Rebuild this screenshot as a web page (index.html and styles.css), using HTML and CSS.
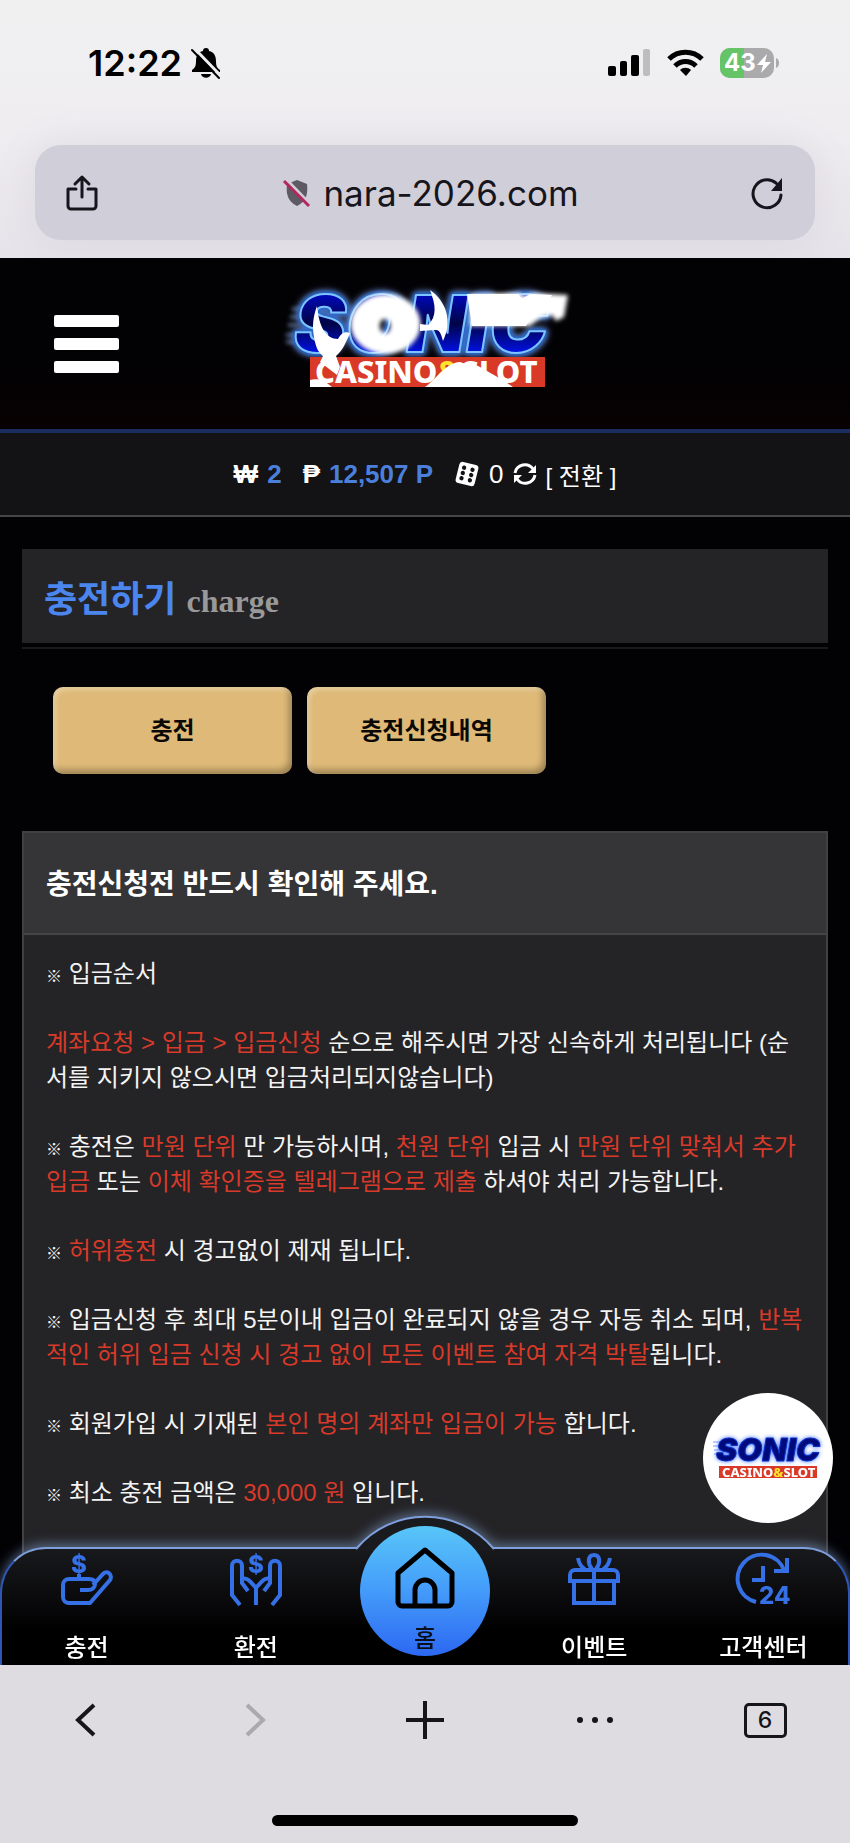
FILE: index.html
```html
<!DOCTYPE html>
<html lang="ko">

<head>
    <meta charset="UTF-8">
    <meta name="viewport" content="width=device-width, initial-scale=1.0">
    <title>충전하기</title>
    <link rel="stylesheet" href="styles.css">
</head>

<body>
    <div class="browser-top">
        <div class="status">
            <span class="time">12:22</span>
            <svg class="bell" width="32" height="32" viewBox="0 0 32 32">
                <path d="M16 1c2 0 3 1 3 3c5 1 7 5 7 10c0 5 1 7 4 9v2H2v-2c3-2 4-4 4-9c0-5 2-9 7-10c0-2 1-3 3-3z" />
                <path d="M11 27h10c-1 5-9 5-10 0z" />
                <path d="M4 1L31 29" stroke="#efeef0" stroke-width="3" />
                <path d="M2 3L29 31" stroke="#000" stroke-width="2" stroke-linecap="round" />
            </svg>
            <span class="space"></span>
            <svg width="43" height="28" viewBox="0 0 43 28">
                <rect x="0" y="17" width="8" height="10" rx="2" />
                <rect x="12" y="12" width="7" height="15" rx="2" />
                <rect x="23" y="6" width="8" height="21" rx="2" />
                <rect x="35" y="0" width="7" height="27" rx="2" fill="#bdbcbf" />
            </svg>
            <svg width="37" height="28" viewBox="0 0 37 28" fill="none" stroke="#000" stroke-width="5">
                <path d="M2 10c9-9 24-9 33 0" />
                <path d="M8 17c6-6 15-6 21 0" />
                <path d="M13 21c3-3 8-3 11 0l-5 6z" fill="#000" stroke="none" />
            </svg>
            <svg width="60" height="30" viewBox="0 0 60 30">
                <defs>
                    <clipPath id="cell"><rect width="54" height="30" rx="10" /></clipPath>
                </defs>
                <g clip-path="url(#cell)">
                    <rect width="54" height="30" fill="#aaa9ac" />
                    <rect width="24" height="30" fill="#65c466" />
                </g>
                <path d="M56 10c4 1 4 9 0 10z" fill="#aaa9ac" />
                <text class="cell-text" x="4" y="23">43</text>
                <path d="M47 6L37 17h6l-2 8L51 14h-6z" fill="#fff" />
            </svg>
        </div>
        <div class="address">
            <button class="plain" aria-label="공유">
                <svg width="32" height="36" viewBox="0 0 32 36" fill="none" stroke="#16151c" stroke-width="3" stroke-linecap="round" stroke-linejoin="round">
                    <path d="M10 14H2v17a3 3 0 0 0 3 3h22a3 3 0 0 0 3-3V14h-8M16 22V2M9 9l7-7l7 7" />
                </svg>
            </button>
            <a class="url" href="#">
                <svg width="28" height="28" viewBox="0 0 28 28">
                    <path d="M14 1l10 4c1 9 0 17-10 22C4 22 3 14 4 5z" fill="#5d5a64" />
                    <path d="M4 1L28 26" stroke="#d0ced8" stroke-width="3" />
                    <path d="M1 2L26 27" stroke="#b3285c" stroke-width="3" />
                </svg>
                nara-2026.com
            </a>
            <button class="plain" aria-label="새로고침">
                <svg width="34" height="34" viewBox="0 0 34 34">
                    <path d="M31 19a14 14 0 1 1-5-12l3 3" fill="none" stroke="#16151c" stroke-width="3" stroke-linecap="round" />
                    <path d="M32 2v13H21z" fill="#16151c" />
                </svg>
            </button>
        </div>
    </div>

    <header>
        <button class="menu" aria-label="메뉴"><i></i><i></i><i></i></button>
        <a href="#" aria-label="SONIC CASINO&amp;SLOT">
            <svg class="logo" width="290" height="110" viewBox="0 0 290 110">
                <defs>
                    <filter id="soft" x="-20%" y="-20%" width="140%" height="140%"><feGaussianBlur stdDeviation="2" /></filter>
                    <linearGradient id="navy" x1="0" y1="0" x2="0" y2="1">
                        <stop offset=".2" stop-color="#0008b8" />
                        <stop offset=".5" stop-color="#000446" />
                        <stop offset=".8" stop-color="#0010e0" />
                    </linearGradient>
                </defs>
                <path d="M12 20h14M10 28h12M8 36h12M6 46h10M6 53h10" stroke="#8fb2ec" stroke-width="2" filter="url(#soft)" />
                <text class="sonic" x="14" y="63">SONIC</text>
                <rect x="30" y="68" width="235" height="30" fill="#d93a27" />
                <text class="casino" x="35" y="94">CASINO<tspan fill="#ffe22b">&amp;</tspan>SLOT</text>
                <g fill="#fff">
                    <path d="M105 5a35 30 0 1 0 1 0zM105 30c7 0 7 14 0 14s-7-14 0-14z" fill-rule="evenodd" filter="url(#soft)" />
                    <path d="M190 5l50-1l3 3l10-3l35 2l-4 22l-8 4l-4-6l-12 3l-10 8H190z" filter="url(#soft)" />
                    <path d="M187 5L238 5L242 10L250 5L272 6L262 20L252 27L246 37H192z" />
                    <path d="M37 17C33 28 32 37 34 48C36 60 39 64 43 67L40 73L57 86L60 78L56 67C62 62 66 54 70 44C64 42 61 45 58 50C46 50 39 38 37 17z" />
                    <path d="M150 1C166 12 173 32 163 52C161 45 160 41 156 41L140 42V35L148 36C157 28 156 16 150 1z" />
                    <path d="M30 98v-7c8-2 14 0 22 7zM145 98c12-8 20-24 35-25l6 2l7-1c10 6 26 14 40 24z" />
                </g>
            </svg>
        </a>
    </header>

    <div class="balance">
        <b>₩</b>
        <b class="blue">2</b>
        <b class="peso">₱</b>
        <b class="blue">12,507 P</b>
        <svg class="dice" width="26" height="26" viewBox="0 0 24 24">
            <g transform="rotate(14 12 12)">
                <rect x="3" y="2" width="18" height="20" rx="3" fill="#fff" />
                <g fill="#131214">
                    <circle cx="8" cy="7" r="2" /><circle cx="8" cy="12" r="2" /><circle cx="8" cy="17" r="2" />
                    <circle cx="16" cy="7" r="2" /><circle cx="16" cy="12" r="2" /><circle cx="16" cy="17" r="2" />
                </g>
            </g>
        </svg>
        <span>0</span>
        <svg width="24" height="24" viewBox="0 0 24 24">
            <path d="M2 11a10 10 0 0 1 18-4M22 13a10 10 0 0 1-18 4" fill="none" stroke="#fff" stroke-width="3" />
            <path d="M23 3v8h-8zM1 21v-8h8z" fill="#fff" />
        </svg>
        <a href="#">[ 전환 ]</a>
    </div>

    <main>
        <h1>충전하기 <small>charge</small></h1>
        <div class="tabs">
            <button>충전</button>
            <button>충전신청내역</button>
        </div>
        <section class="notice">
            <h2>충전신청전 반드시 확인해 주세요.</h2>
            <div class="text">
                <p><i>※</i> 입금순서</p>
                <p><em>계좌요청 &gt; 입금 &gt; 입금신청</em> 순으로 해주시면 가장 신속하게 처리됩니다 (순서를 지키지 않으시면 입금처리되지않습니다)</p>
                <p><i>※</i> 충전은 <em>만원 단위</em> 만 가능하시며, <em>천원 단위</em> 입금 시 <em>만원 단위 맞춰서 추가 입금</em> 또는 <em>이체 확인증을 텔레그램으로 제출</em> 하셔야 처리 가능합니다.</p>
                <p><i>※</i> <em>허위충전</em> 시 경고없이 제재 됩니다.</p>
                <p><i>※</i> 입금신청 후 최대 5분이내 입금이 완료되지 않을 경우 자동 취소 되며, <em>반복적인 허위 입금 신청 시 경고 없이 모든 이벤트 참여 자격 박탈</em>됩니다.</p>
                <p><i>※</i> 회원가입 시 기재된 <em>본인 명의 계좌만 입금이 가능</em> 합니다.</p>
                <p><i>※</i> 최소 충전 금액은 <em>30,000 원</em> 입니다.</p>
            </div>
        </section>
    </main>

    <footer>
        <a class="float" href="#" aria-label="SONIC CASINO&amp;SLOT">
            <svg width="116" height="46" viewBox="0 0 116 46">
                <path d="M3 7h10M3 11h8M4 15h6M4 19h6" stroke="#7d9cf5" stroke-width="1" />
                <text class="sonic small" x="6" y="26">SONIC</text>
                <rect x="9" y="31" width="98" height="12" fill="#d93a27" />
                <text class="casino small" x="12" y="42">CASINO<tspan fill="#ffe22b">&amp;</tspan>SLOT</text>
            </svg>
        </a>
        <nav>
            <svg class="bulge" width="140" height="36" viewBox="0 0 140 36">
                <path d="M0 36L2 33C37-9 103-9 138 33L140 36z" fill="#1a1b1e" />
                <path d="M1 34C37-9 103-9 139 34" fill="none" stroke="#7f9fdc" stroke-width="2" />
            </svg>
            <a href="#">
                <svg width="52" height="52" viewBox="0 0 52 52" class="line">
                    <path d="M19 37h8c4 0 7-2 7-6s-3-5-6-5H8a6 6 0 0 0-6 6v12a6 6 0 0 0 6 6h21L49 27c3-4-2-11-7-6L32 32" />
                    <text class="mark" x="18" y="20" text-anchor="middle">$</text>
                    <path d="M18 21v5" />
                </svg>
                충전
            </a>
            <a href="#">
                <svg width="52" height="52" viewBox="0 0 52 52" class="line">
                    <path d="M10 52L2 42V13c0-7 10-7 10 0v17l6 8M12 26c5-2 8 2 14 9v17" />
                    <path d="M42 52l8-10V13c0-7-10-7-10 0v17l-6 8M40 26c-5-2-8 2-14 9" />
                    <text class="mark" x="26" y="20" text-anchor="middle">$</text>
                </svg>
                환전
            </a>
            <a class="home" href="#">
                <svg width="62" height="62" viewBox="0 0 62 62">
                    <path d="M31 3L58 26v29a4 4 0 0 1-4 4H8a4 4 0 0 1-4-4V26zM21 59V43a10 10 0 0 1 20 0v16" />
                </svg>
                홈
            </a>
            <a href="#">
                <svg width="52" height="52" viewBox="0 0 52 52" class="line">
                    <path d="M2 28v-6a5 5 0 0 1 5-5h38a5 5 0 0 1 5 5v6zM6 28v22h40V28M26 17v33" />
                    <path d="M24 16c-5-6-4-14 2-14s7 8 2 14M10 5c1 6 3 9 7 11M42 5c-1 6-3 9-7 11" />
                </svg>
                이벤트
            </a>
            <a href="#">
                <svg width="52" height="52" viewBox="0 0 52 52" class="line">
                    <path d="M19 49A24 24 0 1 1 47 17M50 5v13H37M26 13v14H15" />
                    <text class="mark" x="22" y="51">24</text>
                </svg>
                고객센터
            </a>
        </nav>
        <div class="browser-bottom">
            <div class="toolbar">
                <button class="plain" aria-label="뒤로">
                    <svg width="24" height="36" viewBox="0 0 24 36"><path d="M21 3L5 18l16 15" /></svg>
                </button>
                <button class="plain" aria-label="앞으로" disabled>
                    <svg width="24" height="36" viewBox="0 0 24 36"><path d="M4 3l16 15L4 33" /></svg>
                </button>
                <button class="plain" aria-label="새 탭">
                    <svg width="38" height="38" viewBox="0 0 38 38"><path d="M19 0v38M0 19h38" /></svg>
                </button>
                <button class="plain" aria-label="더보기">
                    <svg width="38" height="8" viewBox="0 0 38 8" class="dots">
                        <circle cx="4" cy="4" r="3" /><circle cx="19" cy="4" r="3" /><circle cx="34" cy="4" r="3" />
                    </svg>
                </button>
                <button class="plain" aria-label="탭 6개"><span class="count">6</span></button>
            </div>
            <div class="bar"></div>
        </div>
    </footer>
</body>

</html>
```
FILE: styles.css
```css
* {
    box-sizing: border-box;
}

body {
    margin: 0;
    min-height: 100vh;
    display: flex;
    flex-direction: column;
    background: #020104;
    color: #f4f4f4;
    font-family: "Liberation Sans", "Noto Sans CJK KR", sans-serif;
    font-size: 24px;
}

a {
    color: inherit;
    text-decoration: none;
}

svg {
    display: block;
    flex: none;
    overflow: visible;
}

button {
    font-family: inherit;
    cursor: pointer;
}

.plain {
    padding: 0;
    border: none;
    background: none;
    color: #16151c;
}

/* 브라우저 상단 */
.browser-top {
    padding: 44px 35px 18px;
    background: linear-gradient(#f0f0f1, #efedf0 50%, #e6e3ea);
}

.status {
    display: flex;
    align-items: center;
    height: 38px;
    margin-bottom: 63px;
    padding: 0 35px 0 53px;
    gap: 16px;
}

.time {
    color: #000;
    font: 600 36px/38px Inter, sans-serif;
}

.bell {
    margin-left: -8px;
}

.space {
    flex: 1;
}

.cell-text {
    fill: #fff;
    font: 700 24px Inter, sans-serif;
}

.address {
    display: flex;
    align-items: center;
    justify-content: space-between;
    height: 95px;
    padding: 0 31px;
    border-radius: 26px;
    background: #d0ced8;
    box-shadow: 0 0 40px rgba(120, 110, 140, .12);
}

.url {
    display: flex;
    align-items: center;
    gap: 12px;
    padding-left: 14px;
    color: #16151c;
    font: 35px/44px Inter, sans-serif;
}

/* 헤더 */
header {
    display: grid;
    grid-template-columns: 1fr auto 1fr;
    align-items: center;
    height: 175px;
    padding: 0 54px;
    background: linear-gradient(#020104 60%, #080102);
    border-bottom: 4px solid #1b2c5e;
}

.menu {
    display: grid;
    gap: 11px;
    width: 65px;
    padding: 0;
    border: none;
    background: none;
}

.menu i {
    height: 12px;
    border-radius: 2px;
    background: #fff;
}

.sonic {
    fill: url(#navy);
    stroke: #7cc4ff;
    stroke-width: 2;
    stroke-linejoin: round;
    font: italic 900 78px Inter, sans-serif;
    filter: drop-shadow(0 0 2px #1c60d0) drop-shadow(0 0 2px #1c60d0) drop-shadow(0 0 3px #8098d0);
}

.sonic.small {
    fill: #000a7c;
    stroke: #0a32c8;
    stroke-width: 1;
    font-size: 32px;
    filter: drop-shadow(0 0 2px #3d70ff);
}

.casino {
    fill: #fff;
    font: 800 31px "Noto Sans", sans-serif;
}

.casino.small {
    font-size: 13px;
}

.balance {
    display: flex;
    align-items: center;
    justify-content: center;
    gap: 9px;
    height: 84px;
    background: #131214;
    border-bottom: 2px solid #454446;
    color: #fff;
    font-size: 26px;
}

.balance .blue {
    color: #4a80dc;
}

.balance a {
    font-size: 24px;
}

.peso,
.dice {
    margin-left: 12px;
}

/* 본문 */
main {
    flex: 1;
    display: flex;
    flex-direction: column;
    padding: 32px 22px 0;
}

h1 {
    position: relative;
    height: 94px;
    margin: 0 0 44px;
    padding: 0 22px;
    background: #242326;
    color: #4a86ee;
    font-size: 36px;
    line-height: 102px;
}

h1::after {
    content: "";
    position: absolute;
    left: 0;
    right: 0;
    bottom: -6px;
    height: 2px;
    background: #1a191c;
}

h1 small {
    color: #999;
    font-family: "Liberation Serif", serif;
    font-size: 32px;
}

.tabs {
    display: flex;
    gap: 15px;
    margin-bottom: 57px;
    padding: 0 31px;
}

.tabs button {
    width: 239px;
    height: 87px;
    padding: 0 0 4px;
    border: none;
    border-radius: 10px;
    background: #deb977;
    box-shadow: inset 3px 3px 5px rgba(255, 255, 255, .3), inset -3px -4px 6px rgba(0, 0, 0, .3);
    color: #0b0906;
    font-size: 24px;
    font-weight: bold;
}

.notice {
    flex: 1;
    border: 2px solid #414043;
    background: #242326;
}

h2 {
    margin: 0;
    padding: 4px 22px 0;
    border-bottom: 2px solid #454447;
    background: #353437;
    color: #fff;
    font-size: 28px;
    line-height: 96px;
}

.text {
    padding: 21px 20px 124px 22px;
    line-height: 35px;
}

.text p {
    margin: 0 0 34px;
}

.text em {
    color: #d83a2a;
    font-style: normal;
}

.text i {
    font-size: 16px;
    font-style: normal;
    font-weight: bold;
    line-height: 0;
}

/* 하단 고정 메뉴 */
footer {
    position: fixed;
    left: 0;
    right: 0;
    bottom: 0;
}

.float {
    position: absolute;
    right: 17px;
    bottom: 320px;
    display: flex;
    align-items: center;
    justify-content: center;
    width: 130px;
    height: 130px;
    border-radius: 50%;
    background: #fff;
}

nav {
    position: relative;
    display: grid;
    grid-template-columns: repeat(5, 1fr);
    height: 118px;
    border: 2px solid #2f56b4;
    border-top-color: #7f9fdc;
    border-bottom: none;
    border-radius: 46px 46px 0 0;
    background: linear-gradient(#18191c, #08080a 50%, #000 70%);
    filter: drop-shadow(0 -3px 6px rgba(140, 175, 225, .5));
}

nav a {
    display: flex;
    flex-direction: column;
    align-items: center;
    gap: 25px;
    padding-top: 4px;
    color: #fff;
    font-weight: 500;
    line-height: 36px;
}

.bulge {
    position: absolute;
    top: -34px;
    left: 50%;
    margin-left: -70px;
}

.line {
    fill: none;
    stroke: #3670e6;
    stroke-width: 4;
}

.mark {
    fill: #3670e6;
    stroke: none;
    font: 800 24px Inter, sans-serif;
}

nav .home {
    position: relative;
    justify-self: center;
    gap: 12px;
    width: 130px;
    height: 130px;
    margin-top: -23px;
    padding-top: 21px;
    border-radius: 50%;
    background: linear-gradient(#58c6f8, #46a0fa 45%, #2c68f2);
    color: #0a0f1c;
}

.home svg {
    fill: none;
    stroke: #000;
    stroke-width: 5;
    stroke-linejoin: round;
}

/* 브라우저 하단 */
.browser-bottom {
    position: relative;
    overflow: hidden;
    background: #dfdce1;
}

.toolbar {
    display: grid;
    grid-template-columns: repeat(5, 1fr);
    align-items: center;
    justify-items: center;
    height: 110px;
}

.toolbar svg {
    fill: none;
    stroke: #16151c;
    stroke-width: 4;
}

.toolbar .dots {
    fill: #16151c;
    stroke: none;
}

.toolbar button:disabled {
    opacity: .25;
}

.count {
    display: block;
    width: 43px;
    height: 35px;
    border: 3px solid #16151c;
    border-radius: 5px;
    font: 500 23px/29px Inter, sans-serif;
}

.bar {
    width: 36%;
    height: 11px;
    margin: 40px auto 17px;
    border-radius: 6px;
    background: #000;
}
```
